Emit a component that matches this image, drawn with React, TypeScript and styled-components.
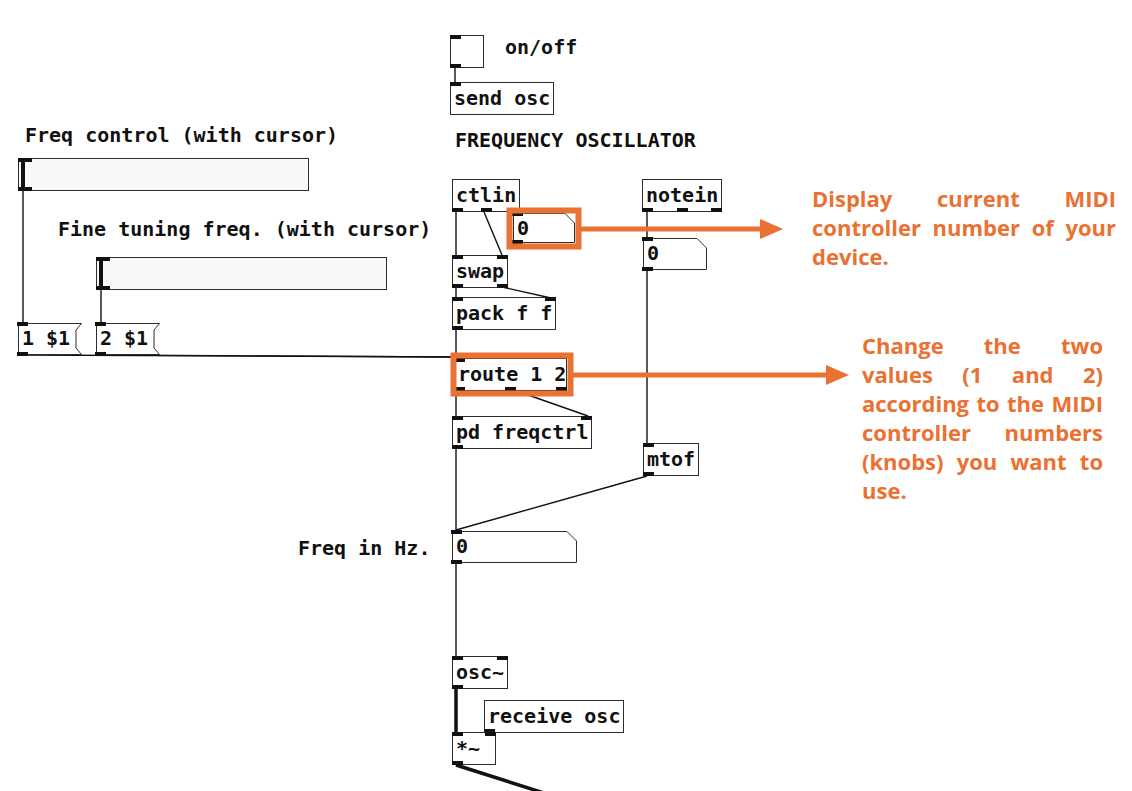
import React from "react";
import styled, { createGlobalStyle } from "styled-components";

const ORANGE = "#E97132";
const INK = "#111";

type Edge = "left" | "mid" | "right";

const GlobalStyle = createGlobalStyle`
  html, body {
    margin: 0;
    padding: 0;
    background: #fff;
  }
  body {
    font-family: "DejaVu Sans Mono", monospace;
  }
`;

const Canvas = styled.div`
    position: relative;
    width: 1132px;
    height: 791px;
    overflow: hidden;
    background: #fff;
`;

const Layer = styled.svg<{ $top?: boolean }>`
    position: absolute;
    left: 0;
    top: 0;
    width: 1132px;
    height: 791px;
    pointer-events: none;
    z-index: ${(p) => (p.$top ? 3 : 0)};
`;

const Node = styled.div<{ $x: number; $y: number; $w?: number; $h?: number }>`
    position: absolute;
    left: ${(p) => p.$x}px;
    top: ${(p) => p.$y}px;
    ${(p) => (p.$w ? `width: ${p.$w}px;` : "")}
    height: ${(p) => p.$h ?? 33}px;
    box-sizing: border-box;
    z-index: 1;
`;

const ObjectBox = styled(Node)`
    border: 1px solid #2e2e2e;
    background: #fff;
    padding: 0 3px;
    font: bold 20px/31px "DejaVu Sans Mono", monospace;
    color: #111;
    white-space: nowrap;
`;

const Port = styled.span<{ $edge: "top" | "bottom"; $at: Edge; $wide?: number }>`
    position: absolute;
    width: ${(p) => p.$wide ?? 11}px;
    height: 4px;
    background: ${INK};
    ${(p) => (p.$edge === "top" ? "top: -1px;" : "bottom: -1px;")}
    ${(p) =>
        p.$at === "left"
            ? "left: -1px;"
            : p.$at === "right"
            ? "right: -1px;"
            : `left: 50%; margin-left: -${(p.$wide ?? 11) / 2}px;`}
`;

const AtomText = styled.span`
    position: relative;
    display: block;
    padding: 0 4px;
    font: bold 20px/31px "DejaVu Sans Mono", monospace;
    color: #111;
    white-space: nowrap;
`;

const Outline = styled.svg`
    position: absolute;
    left: 0;
    top: 0;
    overflow: visible;
`;

const Toggle = styled(Node)`
    border: 1px solid #2e2e2e;
    background: #fff;
`;

const Slider = styled(Node)`
    border: 1px solid #2e2e2e;
    background: #f8f8f8;
`;

const Knob = styled.span`
    position: absolute;
    left: 2px;
    top: 0;
    bottom: 0;
    width: 4px;
    background: ${INK};
`;

const Label = styled.div<{ $x: number; $y: number }>`
    position: absolute;
    left: ${(p) => p.$x}px;
    top: ${(p) => p.$y}px;
    font: bold 20px/30px "DejaVu Sans Mono", monospace;
    color: #111;
    white-space: nowrap;
`;

const Note = styled.div<{ $x: number; $y: number; $w: number }>`
    position: absolute;
    left: ${(p) => p.$x}px;
    top: ${(p) => p.$y}px;
    width: ${(p) => p.$w}px;
    color: ${ORANGE};
    font-family: "Open Sans", "Noto Sans", sans-serif;
    font-weight: 700;
    font-size: 22px;
    line-height: 29px;
    z-index: 3;
`;

const NoteLine = styled.div<{ $last?: boolean }>`
    text-align: ${(p) => (p.$last ? "left" : "justify")};
    text-align-last: ${(p) => (p.$last ? "left" : "justify")};
`;

type ObjProps = {
    x: number;
    y: number;
    w?: number;
    text: string;
    inlets?: Edge[];
    outlets?: Edge[];
};

const Obj = ({ x, y, w, text, inlets = [], outlets = [] }: ObjProps) => (
    <ObjectBox $x={x} $y={y} $w={w}>
        {text}
        {inlets.map((e) => (
            <Port key={"i" + e} $edge="top" $at={e} />
        ))}
        {outlets.map((e) => (
            <Port key={"o" + e} $edge="bottom" $at={e} />
        ))}
    </ObjectBox>
);

const NumberBox = ({ x, y, w, h = 32 }: { x: number; y: number; w: number; h?: number }) => (
    <Node $x={x} $y={y} $w={w} $h={h}>
        <Outline width={w} height={h}>
            <polygon
                points={`0.5,0.5 ${w - 10},0.5 ${w - 0.5},10 ${w - 0.5},${h - 0.5} 0.5,${h - 0.5}`}
                fill="#fff"
                stroke="#2e2e2e"
                strokeWidth={1}
            />
        </Outline>
        <AtomText>0</AtomText>
        <Port $edge="top" $at="left" />
        <Port $edge="bottom" $at="left" />
    </Node>
);

const Message = ({ x, y, w, text }: { x: number; y: number; w: number; text: string }) => {
    const h = 32;
    return (
        <Node $x={x} $y={y} $w={w} $h={h}>
            <Outline width={w} height={h}>
                <polygon
                    points={`0.5,0.5 ${w - 0.5},0.5 ${w - 6},7 ${w - 6},${h - 7} ${w - 0.5},${h - 0.5} 0.5,${h - 0.5}`}
                    fill="#fff"
                    stroke="#2e2e2e"
                    strokeWidth={1}
                />
            </Outline>
            <AtomText>{text}</AtomText>
            <Port $edge="top" $at="left" />
            <Port $edge="bottom" $at="left" />
        </Node>
    );
};

const HSlider = ({ x, y }: { x: number; y: number }) => (
    <Slider $x={x} $y={y} $w={291} $h={33}>
        <Knob />
        <Port $edge="top" $at="left" $wide={14} />
        <Port $edge="bottom" $at="left" $wide={14} />
    </Slider>
);

type Wire = [number, number, number, number, boolean?];

const wires: Wire[] = [
    [455, 68, 455, 82],
    [23, 190, 23, 323],
    [101, 290, 101, 323],
    [22, 355, 456, 357],
    [100, 355, 456, 357],
    [456, 212, 456, 255],
    [484, 212, 502, 255],
    [502, 287, 551, 298],
    [456, 287, 456, 297],
    [456, 330, 456, 358],
    [456, 389, 456, 416],
    [511, 389, 588, 416],
    [456, 449, 456, 530],
    [647, 212, 647, 238],
    [647, 270, 647, 443],
    [647, 476, 456, 530],
    [456, 563, 456, 657],
    [456, 689, 456, 732, true],
    [456, 765, 566, 800, true],
];

export default function App() {
    return (
        <>
            <GlobalStyle />
            <Canvas>
                <Layer viewBox="0 0 1132 791">
                    {wires.map(([x1, y1, x2, y2, thick], i) => (
                        <line
                            key={i}
                            x1={x1}
                            y1={y1}
                            x2={x2}
                            y2={y2}
                            stroke={INK}
                            strokeWidth={thick ? 3.5 : 1.4}
                        />
                    ))}
                </Layer>

                <Toggle $x={450} $y={35} $w={34} $h={33}>
                    <Port $edge="top" $at="left" />
                    <Port $edge="bottom" $at="left" />
                </Toggle>
                <Label $x={505} $y={32}>on/off</Label>
                <Obj x={450} y={82} text="send osc" inlets={["left"]} />

                <Label $x={455} $y={125}>FREQUENCY OSCILLATOR</Label>
                <Label $x={25} $y={120}>Freq control (with cursor)</Label>
                <HSlider x={18} y={158} />
                <Label $x={58} $y={214}>Fine tuning freq. (with cursor)</Label>
                <HSlider x={96} y={257} />

                <Message x={18} y={323} w={64} text="1 $1" />
                <Message x={96} y={323} w={64} text="2 $1" />

                <Obj x={452} y={179} text="ctlin" outlets={["left", "mid", "right"]} />
                <NumberBox x={513} y={213} w={62} h={30} />
                <Obj x={642} y={179} text="notein" outlets={["left", "mid", "right"]} />
                <NumberBox x={643} y={238} w={64} />

                <Obj x={452} y={255} text="swap" inlets={["left", "right"]} outlets={["left", "right"]} />
                <Obj x={452} y={297} text="pack f f" inlets={["left", "right"]} outlets={["left"]} />
                <Obj x={454} y={358} w={113} text="route 1 2" inlets={["left"]} outlets={["left", "mid", "right"]} />
                <Obj x={452} y={416} text="pd freqctrl" inlets={["left", "right"]} outlets={["left"]} />
                <Obj x={643} y={443} text="mtof" inlets={["left"]} outlets={["left"]} />

                <Label $x={298} $y={533}>Freq in Hz.</Label>
                <NumberBox x={452} y={531} w={125} />

                <Obj x={452} y={656} text="osc~" inlets={["left", "right"]} outlets={["left"]} />
                <Obj x={484} y={700} text="receive osc" outlets={["left"]} />
                <Obj x={452} y={732} w={44} text="*~" inlets={["left", "right"]} outlets={["left"]} />

                <Layer $top viewBox="0 0 1132 791">
                    <rect x={509.5} y={210.5} width={69} height={36} fill="none" stroke={ORANGE} strokeWidth={6} />
                    <line x1={581} y1={229} x2={764} y2={229} stroke={ORANGE} strokeWidth={5} />
                    <polygon points="760,219 783,229 760,239" fill={ORANGE} />
                    <rect x={453.5} y={355.5} width={117} height={38} fill="none" stroke={ORANGE} strokeWidth={6} />
                    <line x1={573} y1={375} x2={830} y2={375} stroke={ORANGE} strokeWidth={5} />
                    <polygon points="826,365 849,375 826,385" fill={ORANGE} />
                </Layer>

                <Note $x={812} $y={184} $w={304}>
                    <NoteLine>Display current MIDI</NoteLine>
                    <NoteLine>controller number of your</NoteLine>
                    <NoteLine $last>device.</NoteLine>
                </Note>
                <Note $x={862} $y={331} $w={241}>
                    <NoteLine>Change the two</NoteLine>
                    <NoteLine>values (1 and 2)</NoteLine>
                    <NoteLine>according to the MIDI</NoteLine>
                    <NoteLine>controller numbers</NoteLine>
                    <NoteLine>(knobs) you want to</NoteLine>
                    <NoteLine $last>use.</NoteLine>
                </Note>
            </Canvas>
        </>
    );
}
